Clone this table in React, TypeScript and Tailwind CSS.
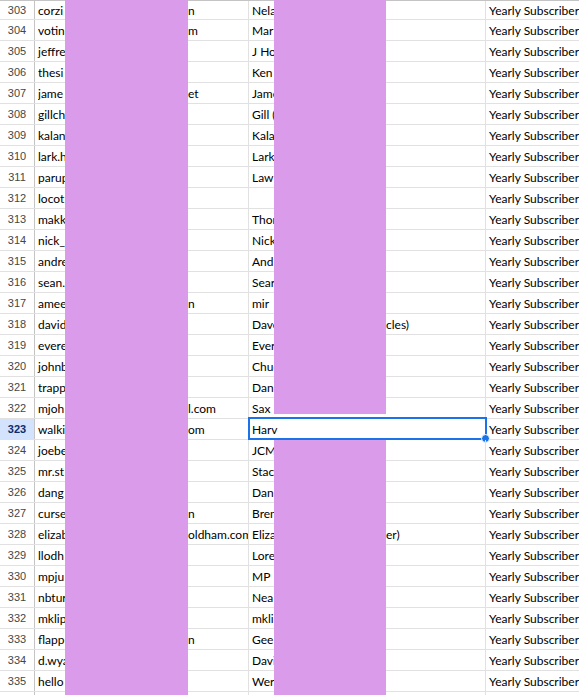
type Row = { n: number; a: string; aEnd?: string; b: string; bEnd?: string };

const rows: Row[] = [
  { n: 303, a: "corzi", aEnd: "n", b: "Nela" },
  { n: 304, a: "votin", aEnd: "m", b: "Mar" },
  { n: 305, a: "jeffre", b: "J Ho" },
  { n: 306, a: "thesi", b: "Ken" },
  { n: 307, a: "jame", aEnd: "et", b: "Jame" },
  { n: 308, a: "gillch", b: "Gill (" },
  { n: 309, a: "kalan", b: "Kala" },
  { n: 310, a: "lark.h", b: "Lark" },
  { n: 311, a: "parup", b: "Law" },
  { n: 312, a: "locot", b: "" },
  { n: 313, a: "makk", b: "Thor" },
  { n: 314, a: "nick_", b: "Nick" },
  { n: 315, a: "andre", b: "And" },
  { n: 316, a: "sean.", b: "Sear" },
  { n: 317, a: "amee", aEnd: "n", b: "mir" },
  { n: 318, a: "david", b: "Dave", bEnd: "cles)" },
  { n: 319, a: "evere", b: "Ever" },
  { n: 320, a: "johnb", b: "Chuc" },
  { n: 321, a: "trapp", b: "Dan" },
  { n: 322, a: "mjoh", aEnd: "l.com", b: "Sax" },
  { n: 323, a: "walki", aEnd: "om", b: "Harv" },
  { n: 324, a: "joebe", b: "JCM" },
  { n: 325, a: "mr.st", b: "Stac" },
  { n: 326, a: "dang", b: "Dan" },
  { n: 327, a: "curse", aEnd: "n", b: "Bren" },
  { n: 328, a: "elizab", aEnd: "oldham.com", b: "Eliza", bEnd: "er)" },
  { n: 329, a: "llodh", b: "Lore" },
  { n: 330, a: "mpju", b: "MP" },
  { n: 331, a: "nbtur", b: "Nea" },
  { n: 332, a: "mklip", b: "mkli" },
  { n: 333, a: "flapp", aEnd: "n", b: "Gee" },
  { n: 334, a: "d.wya", b: "Davi" },
  { n: 335, a: "hello", b: "Wer" },
];

const SELECTED = 323;

function Cell({ start, end, lead, className }: { start: string; end?: string; lead: string; className: string }) {
  return (
    <div className={`flex shrink-0 items-center overflow-hidden whitespace-nowrap border-r border-[#e1e1e1] pl-[3px] pt-px ${className}`}>
      {end ? (
        <>
          <span className={`inline-block shrink-0 overflow-hidden ${lead}`}>{start}</span>
          <span>{end}</span>
        </>
      ) : (
        <span>{start}</span>
      )}
    </div>
  );
}

export default function App() {
  return (
    <div className="relative h-[695px] w-[579px] overflow-hidden bg-white text-[12px] text-black [font-family:Lato,sans-serif]">
      <div className="h-px bg-[#c4c4c4]" />
      {rows.map((r, i) => {
        const sel = r.n === SELECTED;
        return (
          <div key={r.n} className={`flex border-b border-[#e1e1e1] ${i === 0 ? "h-[19px]" : "h-[21px]"}`}>
            <div
              className={`flex w-[35px] shrink-0 items-center justify-center border-r border-[#c4c4c4] pt-px text-[11px] [font-family:'Liberation_Sans',Arial,sans-serif] ${
                sel ? "bg-[#d3e3fd] font-bold text-[#0b2d6b]" : "text-[#444746]"
              }`}
            >
              {r.n}
            </div>
            <Cell start={r.a} end={r.aEnd} lead="w-[150px]" className="w-[214px]" />
            <div className="relative flex w-[237px] shrink-0">
              <Cell start={r.b} end={r.bEnd} lead="w-[134px]" className="w-[237px]" />
              {sel ? (
                <div className="absolute -left-[1px] -top-[2px] h-[23px] w-[239px] border-2 border-[#1a73e8]">
                  <div className="absolute -bottom-[5px] -right-[5px] h-[9px] w-[9px] rounded-full border border-white bg-[#1a73e8]" />
                </div>
              ) : null}
            </div>
            <div className="flex flex-1 items-center whitespace-nowrap pl-[3px] pt-px">Yearly Subscriber</div>
          </div>
        );
      })}
      {/* next row, cut off by the window */}
      <div className="flex h-[21px]">
        <div className="w-[35px] shrink-0 border-r border-[#c4c4c4]" />
        <div className="w-[214px] shrink-0 border-r border-[#e1e1e1]" />
        <div className="w-[237px] shrink-0 border-r border-[#e1e1e1]" />
      </div>

      {/* redaction blocks */}
      <div className="absolute left-[65px] top-0 h-[695px] w-[123px] bg-[#d99bea]" />
      <div className="absolute left-[274px] top-0 h-[414px] w-[112px] bg-[#d99bea]" />
      <div className="absolute left-[274px] top-[440px] h-[255px] w-[112px] bg-[#d99bea]" />
    </div>
  );
}
